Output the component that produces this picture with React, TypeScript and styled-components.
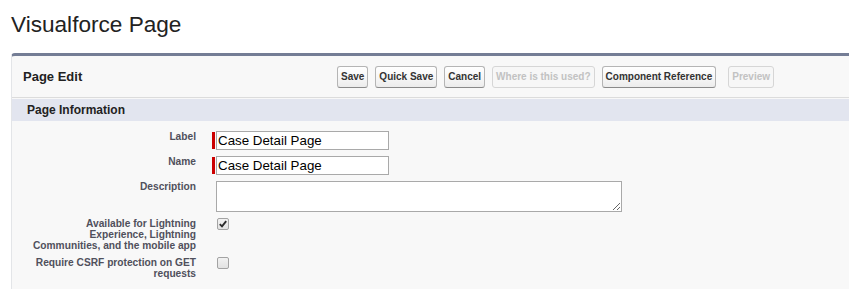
import React from "react";
import styled, { createGlobalStyle } from "styled-components";

const GlobalStyle = createGlobalStyle`
  body {
    margin: 0;
    background: #fff;
    font-family: "Liberation Sans", Arial, sans-serif;
  }
`;

interface ButtonDef {
  label: string;
  disabled?: boolean;
  spaced?: boolean;
}

const buttons: ButtonDef[] = [
  { label: "Save" },
  { label: "Quick Save" },
  { label: "Cancel" },
  { label: "Where is this used?", disabled: true },
  { label: "Component Reference" },
  { label: "Preview", disabled: true, spaced: true }
];

function CheckBox({ checked }: { checked?: boolean }) {
  return (
    <Box>
      {checked && (
        <svg width="10" height="10" viewBox="0 0 10 10">
          <path
            d="M1.8 5.2 L4 7.4 L8.2 2.2"
            stroke="#2b2b2b"
            strokeWidth="1.9"
            fill="none"
          />
        </svg>
      )}
    </Box>
  );
}

export default function App() {
  return (
    <Page>
      <GlobalStyle />
      <PageTitle>Visualforce Page</PageTitle>
      <Block>
        <BlockHeader>
          <BlockTitle>Page Edit</BlockTitle>
          <ButtonBar>
            {buttons.map(b => (
              <Button key={b.label} disabled={b.disabled} $spaced={b.spaced}>
                {b.label}
              </Button>
            ))}
          </ButtonBar>
        </BlockHeader>
        <SubHeader>Page Information</SubHeader>
        <Fields>
          <FieldRow>
            <FieldLabel>Label</FieldLabel>
            <Required>
              <RequiredMark />
              <TextInput defaultValue="Case Detail Page" />
            </Required>
          </FieldRow>
          <FieldRow>
            <FieldLabel>Name</FieldLabel>
            <Required>
              <RequiredMark />
              <TextInput defaultValue="Case Detail Page" />
            </Required>
          </FieldRow>
          <FieldRow>
            <FieldLabel>Description</FieldLabel>
            <TextArea />
          </FieldRow>
          <FieldRow>
            <FieldLabel>
              Available for Lightning
              <br />
              Experience, Lightning
              <br />
              Communities, and the mobile app
            </FieldLabel>
            <CheckBox checked />
          </FieldRow>
          <FieldRow>
            <FieldLabel>
              Require CSRF protection on GET
              <br />
              requests
            </FieldLabel>
            <CheckBox />
          </FieldRow>
        </Fields>
      </Block>
    </Page>
  );
}

const Page = styled.div`
  padding: 12px 0 0 11px;
`;

const PageTitle = styled.h1`
  margin: 0;
  font-size: 22.6px;
  font-weight: 400;
  line-height: 26px;
  color: #222;
`;

const Block = styled.section`
  margin-top: 15px;
  background: #f8f8f8;
  border: 1px solid #e3e5e8;
  border-top: 3px solid #747d95;
  border-right: 0;
  border-bottom: 0;
  border-radius: 4px 0 0 0;
  padding-bottom: 10px;
`;

const BlockHeader = styled.div`
  display: flex;
  align-items: center;
  height: 41px;
  padding-left: 11px;
  border-bottom: 1px solid #dcdcdc;
`;

const BlockTitle = styled.h2`
  margin: 0;
  width: 314px;
  font-size: 13px;
  font-weight: 700;
  color: #222;
`;

const ButtonBar = styled.div`
  display: flex;
  gap: 7px;
`;

const Button = styled.button<{ $spaced?: boolean }>`
  height: 22px;
  padding: 2px 3px;
  margin-left: ${p => (p.$spaced ? "5px" : "0")};
  font-family: "Liberation Sans", Arial, sans-serif;
  font-size: 10px;
  font-weight: 700;
  line-height: 16px;
  color: #333;
  background: linear-gradient(#ffffff, #f5f5f5 60%, #ececec);
  border: 1px solid #b5b5b5;
  border-bottom-color: #8a8a8a;
  border-radius: 3px;

  &:disabled {
    color: #c2c2c2;
    background: #f7f7f7;
    border-color: #d6d6d6;
  }
`;

const SubHeader = styled.h3`
  margin: 1px 0 0;
  height: 22px;
  padding-left: 15px;
  background: #e2e5ef;
  font-size: 12px;
  font-weight: 700;
  line-height: 22px;
  color: #222;
`;

const Fields = styled.div`
  display: flex;
  flex-direction: column;
  gap: 6px;
  padding-top: 10px;
`;

const FieldRow = styled.div`
  display: grid;
  grid-template-columns: 184px auto;
  column-gap: 20px;
  align-items: start;
`;

const FieldLabel = styled.label`
  text-align: right;
  white-space: nowrap;
  font-size: 10.2px;
  font-weight: 700;
  line-height: 11px;
  color: #50505c;
`;

const Required = styled.div`
  display: flex;
  gap: 1px;
  margin-left: -4px;
`;

const RequiredMark = styled.span`
  width: 3px;
  margin: 1px 0;
  background: #cc0000;
`;

const TextInput = styled.input`
  box-sizing: border-box;
  width: 173px;
  height: 19px;
  padding: 0 1px;
  font-family: "Liberation Sans", Arial, sans-serif;
  font-size: 13.33px;
  color: #000;
  background: #fff;
  border: 1px solid #a9a9a9;
  border-radius: 0;
  outline: none;
`;

const TextArea = styled.textarea`
  box-sizing: border-box;
  display: block;
  width: 406px;
  height: 31px;
  padding: 1px 2px;
  font-family: "Liberation Sans", Arial, sans-serif;
  font-size: 13.33px;
  background: #fff;
  border: 1px solid #a9a9a9;
  border-radius: 0;
  outline: none;
`;

const Box = styled.span`
  box-sizing: border-box;
  display: flex;
  align-items: center;
  justify-content: center;
  width: 12px;
  height: 12px;
  margin-left: 1px;
  border: 1px solid #a3a3a3;
  border-radius: 2px;
  background: linear-gradient(#f2f2f2, #e2e2e2);
`;
